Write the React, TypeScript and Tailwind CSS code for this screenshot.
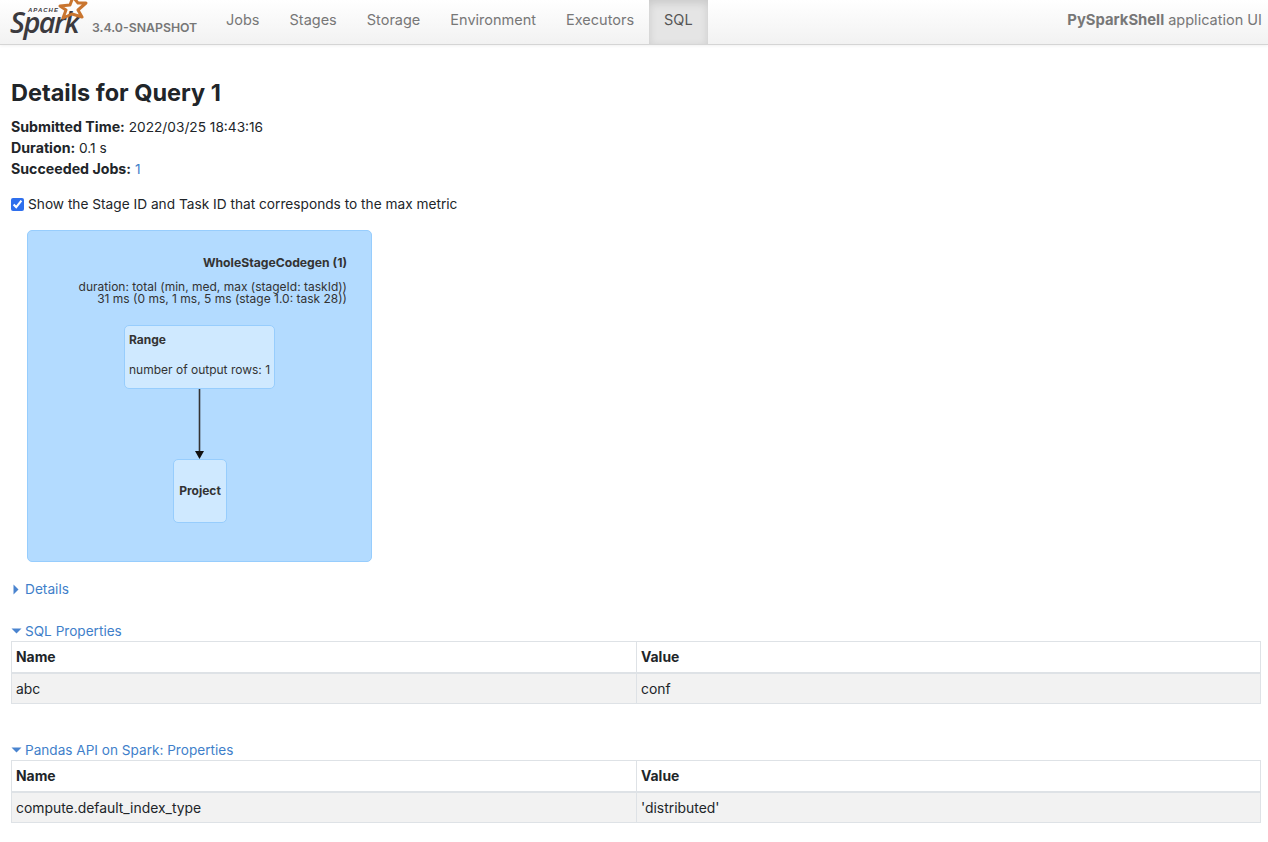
const font = "font-['Inter','Liberation_Sans',sans-serif]";

const NavItem = ({ label, active }: { label: string; active?: boolean }) => (
  <div
    className={
      active
        ? 'h-full px-[15px] pb-[6px] flex items-center text-[#555] bg-[#e5e5e5] shadow-[inset_0_3px_8px_rgba(0,0,0,0.125)]'
        : 'h-full px-[15px] pb-[6px] flex items-center text-[#777]'
    }
  >
    {label}
  </div>
);

const SparkLogo = () => (
  <div className="relative w-[92px] h-[44px] shrink-0">
    <span className="absolute left-[10px] top-[12px] text-[29px] leading-[20px] font-semibold italic tracking-[-1.6px] text-[#3c3a3e] font-['Open_Sans',sans-serif]">
      Spark
    </span>
    <span className="absolute left-[28px] top-[9px] text-[6px] leading-[3px] font-bold italic tracking-[1px] text-[#3c3a3e] font-['Liberation_Sans',sans-serif]">
      APACHE
    </span>
    <svg className="absolute left-[57px] top-0" width="31" height="22" viewBox="0 0 31 22">
      <path
        d="M3 6 L13 5 L16 -3 L21 3 L29 3 L21 10 L25 17 L15 14 L6 18 L9 10 Z"
        fill="none"
        stroke="#c9752f"
        strokeWidth="3"
        strokeLinejoin="round"
      />
    </svg>
  </div>
);

const Caret = ({ open }: { open: boolean }) =>
  open ? (
    <svg width="11" height="6" viewBox="0 0 11 6" className="shrink-0">
      <path d="M0.5 0.5 L10.5 0.5 L5.5 5.5 Z" fill="#4a84cf" />
    </svg>
  ) : (
    <svg width="6" height="11" viewBox="0 0 6 11" className="shrink-0">
      <path d="M0.5 0.5 L5.5 5.5 L0.5 10.5 Z" fill="#4a84cf" />
    </svg>
  );

const PropsTable = ({ title, name, value }: { title: string; name: string; value: string }) => (
  <div>
    <div className="h-[20px] flex items-center gap-[3px] text-[13.6px] text-[#3f7fca]">
      <Caret open />
      <span>{title}</span>
    </div>
    <table className="w-[1250px] table-fixed border-collapse text-[13.9px] text-[#212529]">
      <thead>
        <tr className="h-[31px]">
          <th className="w-[625px] border border-[#dee2e6] border-b-2 px-[4px] pt-[1px] text-left font-bold">Name</th>
          <th className="border border-[#dee2e6] border-b-2 px-[4px] pt-[1px] text-left font-bold">Value</th>
        </tr>
      </thead>
      <tbody>
        <tr className="h-[31px] bg-[#f2f2f2]">
          <td className="border border-[#dee2e6] px-[4px] pt-[3px]">{name}</td>
          <td className="border border-[#dee2e6] px-[4px] pt-[3px]">{value}</td>
        </tr>
      </tbody>
    </table>
  </div>
);

const PlanGraph = () => (
  <div className="relative w-[345px] h-[332px] ml-[16px] mt-[15px] bg-[#b3dbff] border-[1.5px] border-[#97cdfd] rounded-[5px] text-[12px] leading-[12px] text-[#333]">
    <div className="absolute right-[24px] top-[26px] text-[12.2px] font-bold text-right">WholeStageCodegen (1)</div>
    <div className="absolute right-[24px] top-[50px] text-right whitespace-nowrap">
      <div>duration: total (min, med, max (stageId: taskId))</div>
      <div>31 ms (0 ms, 1 ms, 5 ms (stage 1.0: task 28))</div>
    </div>
    <div className="absolute left-[96px] top-[94px] w-[151px] h-[64px] bg-[#cfe9ff] border-[1.5px] border-[#97cdfd] rounded-[5px] pl-[4px]">
      <div className="mt-[8px] font-bold">Range</div>
      <div className="mt-[18px] whitespace-nowrap">number of output rows: 1</div>
    </div>
    <svg className="absolute left-[165px] top-[158px]" width="13" height="71" viewBox="0 0 13 71">
      <path d="M6.5 0 L6.5 62" stroke="#333" strokeWidth="1.6" />
      <path d="M2 62 L11 62 L6.5 70 Z" fill="#111" />
    </svg>
    <div className="absolute left-[145px] top-[228px] w-[54px] h-[64px] bg-[#cfe9ff] border-[1.5px] border-[#97cdfd] rounded-[5px] flex items-center justify-center font-bold">
      Project
    </div>
  </div>
);

export default function App() {
  return (
    <div className={`${font} min-h-[842px] bg-white text-[13.7px] leading-[21px] text-[#212529]`}>
      <nav className="h-[45px] flex items-stretch border-b border-[#d5d5d5] bg-gradient-to-b from-white to-[#f2f2f2] shadow-[0_1px_3px_rgba(0,0,0,0.06)] text-[14.5px]">
        <SparkLogo />
        <div className="w-[115px] pt-[21px] text-[12.3px] leading-[14px] font-semibold text-[#777] shrink-0">3.4.0-SNAPSHOT</div>
        <div className="flex items-stretch ml-[4px]">
          <NavItem label="Jobs" />
          <NavItem label="Stages" />
          <NavItem label="Storage" />
          <NavItem label="Environment" />
          <NavItem label="Executors" />
          <NavItem label="SQL" active />
        </div>
        <div className="ml-auto pr-[6px] pb-[6px] flex items-center text-[#777]">
          <span>
            <strong className="text-[14.8px] leading-none font-bold">PySparkShell</strong> application UI
          </span>
        </div>
      </nav>

      <main className="px-[11px]">
        <h3 className="mt-[33px] text-[23.5px] leading-[29px] font-bold text-[#212529]">Details for Query 1</h3>
        <ul className="mt-[10px]">
          <li className="h-[21px]"><strong className="text-[14.2px] leading-none font-bold">Submitted Time:</strong> 2022/03/25 18:43:16</li>
          <li className="h-[21px]"><strong className="text-[14.2px] leading-none font-bold">Duration:</strong> 0.1 s</li>
          <li className="h-[21px]"><strong className="text-[14.2px] leading-none font-bold">Succeeded Jobs:</strong> <span className="text-[#3f7fca]">1</span></li>
        </ul>
        <label className="mt-[14px] flex items-center gap-[4px] h-[21px]">
          <input type="checkbox" defaultChecked className="w-[13px] h-[13px] m-0 accent-[#2f6fed]" />
          <span>Show the Stage ID and Task ID that corresponds to the max metric</span>
        </label>
        <PlanGraph />
        <div className="mt-[17px] h-[21px] flex items-center gap-[6px] pl-[2px] text-[#3f7fca]">
          <Caret open={false} />
          <span>Details</span>
        </div>
        <div className="mt-[21px]">
          <PropsTable title="SQL Properties" name="abc" value="conf" />
        </div>
        <div className="mt-[36px]">
          <PropsTable title="Pandas API on Spark: Properties" name="compute.default_index_type" value="'distributed'" />
        </div>
      </main>
    </div>
  );
}
